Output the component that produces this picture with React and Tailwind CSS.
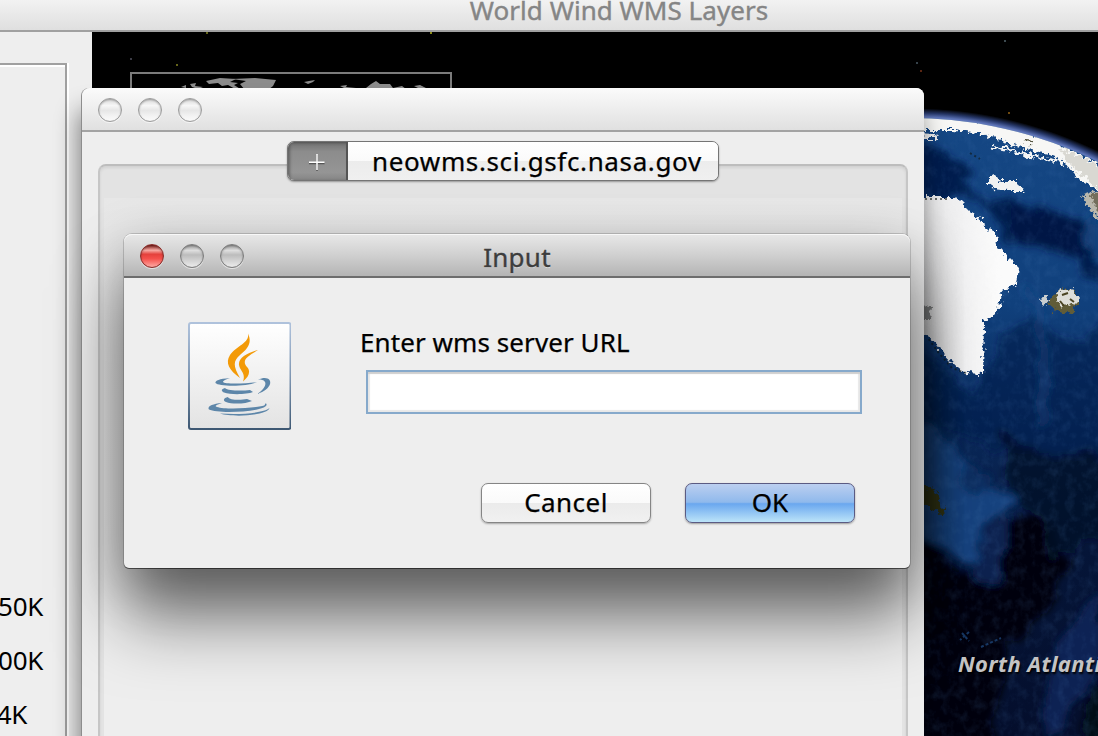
import React from "react";

function WindowButtons({ tone }) {
  const light = "border-[#9c9c9c] bg-[linear-gradient(#d9d9d9,#f7f7f7_30%,#e6e6e6_52%,#f4f4f4_80%,#fafafa)]";
  const grey = "border-[#7c7c7c] bg-[linear-gradient(#9b9b9b,#dedede_25%,#bcbcbc_45%,#c9c9c9_60%,#ececec)]";
  const red = "border-[#8a2b27] bg-[linear-gradient(#7d1916,#f7aaa3_24%,#e4413c_42%,#f4504b_62%,#ffaaa4)]";
  const rest = tone === "light" ? light : grey;
  const first = tone === "light" ? light : red;
  return (
    <div className="flex gap-4">
      {[first, rest, rest].map((c, i) => (
        <span key={i} className={"size-6 rounded-full border-[1.5px] shadow-[0_1px_0_rgba(255,255,255,.6),inset_0_1px_2px_rgba(0,0,0,.3)] " + c} />
      ))}
    </div>
  );
}

function SidePanel() {
  return (
    <aside className="w-[92px] shrink-0 bg-[#eeeeee] pt-[31px]">
      <div className="h-full w-[69px] border-r-2 border-white">
        <div className="h-full w-[67px] border-t-2 border-r-2 border-[#a0a0a0] shadow-[inset_0_2px_0_#fff]">
          <div className="flex flex-col items-end pt-[514px] text-[26px] leading-[54px] tracking-[-.3px] text-black">
            <span className="mr-[22px] whitespace-nowrap">250K</span>
            <span className="mr-[22px] whitespace-nowrap">500K</span>
            <span className="mr-[38px] whitespace-nowrap">4K</span>
          </div>
        </div>
      </div>
    </aside>
  );
}

function Globe() {
  return (
    <svg className="block h-full w-full" viewBox="92 32 1006 704">
      <defs>
        <radialGradient id="air" gradientUnits="userSpaceOnUse" cx="910" cy="542" r="434">
          <stop offset=".965" stopColor="#8ea4dd" />
          <stop offset=".98" stopColor="#5b72b5" />
          <stop offset=".989" stopColor="#263768" />
          <stop offset="1" stopColor="#000" />
        </radialGradient>
        <linearGradient id="sea" x1="0" y1="120" x2="0" y2="736" gradientUnits="userSpaceOnUse">
          <stop offset="0" stopColor="#154784" />
          <stop offset=".3" stopColor="#10407c" />
          <stop offset=".5" stopColor="#0a2a5c" />
          <stop offset=".7" stopColor="#051538" />
          <stop offset="1" stopColor="#040e2c" />
        </linearGradient>
        <linearGradient id="ice" x1="924" x2="1000" y1="0" y2="0" gradientUnits="userSpaceOnUse">
          <stop offset="0" stopColor="#e9e9ea" />
          <stop offset=".45" stopColor="#f1f1f2" />
          <stop offset="1" stopColor="#fbfbfb" />
        </linearGradient>
        <linearGradient id="shade" x1="924" x2="965" y1="0" y2="0" gradientUnits="userSpaceOnUse">
          <stop offset="0" stopColor="#000" stopOpacity=".3" />
          <stop offset="1" stopColor="#000" stopOpacity="0" />
        </linearGradient>
        <linearGradient id="fade" x1="0" x2="0" y1="190" y2="420" gradientUnits="userSpaceOnUse">
          <stop offset="0" stopColor="#000" />
          <stop offset="1" stopColor="#fff" />
        </linearGradient>
        <mask id="lower"><rect x="924" y="140" width="60" height="500" fill="url(#fade)" /></mask>
        <filter id="rag" x="-10%" y="-10%" width="120%" height="120%">
          <feTurbulence type="fractalNoise" baseFrequency=".2" numOctaves="3" seed="4" />
          <feDisplacementMap in="SourceGraphic" scale="11" xChannelSelector="R" yChannelSelector="G" />
          <feGaussianBlur stdDeviation=".5" />
        </filter>
        <filter id="soft" x="-30%" y="-30%" width="160%" height="160%">
          <feTurbulence type="fractalNoise" baseFrequency=".04" numOctaves="4" seed="9" />
          <feDisplacementMap in="SourceGraphic" scale="22" xChannelSelector="R" yChannelSelector="G" />
          <feGaussianBlur stdDeviation="3.5" />
        </filter>
        <filter id="grain" x="0" y="0" width="100%" height="100%">
          <feTurbulence type="fractalNoise" baseFrequency=".12 .09" numOctaves="4" seed="3" />
          <feColorMatrix values="0 0 0 0 .08  0 0 0 0 .22  0 0 0 0 .5  0 1.6 0 0 -.68" />
        </filter>
        <clipPath id="disc"><circle cx="910" cy="542" r="424" /></clipPath>
      </defs>
      <rect x="92" y="32" width="1006" height="704" fill="#000" />
      <circle cx="910" cy="542" r="434" fill="url(#air)" />
      <g clipPath="url(#disc)">
        <rect x="900" y="100" width="198" height="636" fill="url(#sea)" />
        <g filter="url(#soft)">
          <path d="M915 140L945 153L975 175L962 186L985 196L1015 205L1050 208L1090 225L1105 290L1075 262L1050 245L1010 243L985 200L915 195Z" fill="#051f4e" />
          <path d="M1005 208L1090 218L1098 262L1045 250L1015 243Z" fill="#041743" opacity=".8" />
          <path d="M1098 205L1098 265L1084 245Z" fill="#123f79" />
          <path d="M915 345L975 395L1005 330L1030 320L1080 340L1105 320V460L1000 450L950 430L915 425Z" fill="#071d4c" opacity=".65" />
          <path d="M1030 290Q1052 350 1040 430" fill="none" stroke="#164988" strokeWidth="8" opacity=".4" />
          <path d="M900 425L932 425L960 455L978 474L1018 506L985 528L972 562L900 530Z" fill="#12427e" />
          <path d="M965 462L990 478L978 495L962 490Z" fill="#0a2d61" />
          <path d="M982 528L1015 518L1015 590L968 580Z" fill="#09204f" />
          <path d="M900 538L925 538L960 572L1000 588L1008 525L1040 510L1070 560L1050 610L1010 640L985 760H900Z" fill="#01040f" />
          <path d="M1000 430L1050 455L1130 450V530L1050 560L1040 510L1012 500Z" fill="#020b28" opacity=".8" />
          <path d="M1060 640L1085 610L1100 590V660L1060 730L1040 736Z" fill="#0b2860" opacity=".75" />
          <path d="M1090 690L1130 670V760H1080Z" fill="#020717" />
        </g>
        <rect x="924" y="110" width="174" height="626" filter="url(#grain)" opacity=".2" />
        <g filter="url(#rag)">
          <path d="M915 113L950 115L1000 123L1040 135L1130 178V206L1098 190L1080 180L1068 166L1048 154L1025 148L985 135L955 130L915 130Z" fill="#f7f7f5" />
          <path d="M1058 148L1085 158L1130 180V206L1098 189L1086 178L1073 168Z" fill="#d9d8d2" />
          <path d="M1022 141L1032 142" fill="none" stroke="#55543f" strokeWidth="2.500" />
          <path d="M992 146L1012 150L1032 156L1056 161" fill="none" stroke="#f4f5f5" strokeWidth="3" />
          <path d="M918 133L935 134L938 139L920 139Z" fill="#eee" />
          <path d="M975 177L979 175L986 182L1003 182L1003 186L1010 192L995 192L979 190L975 184Z" fill="#f1f2f2" transform="translate(14 -1)" />
          <path d="M905 197L955 197L970 212L996 234L997 246L1018 267L1016 284L1002 292L998 312L984 322L983 374L965 373L948 359L933 340L905 325Z" fill="url(#ice)" />
          <path d="M1082 196L1110 186V232L1092 213Z" fill="#b9b7ac" />
          <path d="M1091 194L1110 190V222L1096 208Z" fill="#736e5b" />
          <path d="M1052 297L1060 289L1075 290L1079 304L1070 314L1056 311L1048 304Z" fill="#615b37" />
          <path d="M1060 288L1066 291L1072 289L1079 300L1073 306L1066 303L1062 307L1056 300Z" fill="#deded9" />
          <path d="M1038 298L1046 297L1050 301L1043 305Z" fill="#c9ced0" />
          <path d="M905 485L934 488L940 503L946 508L942 517L930 506L905 505Z" fill="#343714" />
          <path d="M905 302L932 307L930 320L905 320Z" fill="#898b8c" />
        </g>
        <path d="M1062 295L1068 293M1070 299L1074 302M1060 301L1064 306" stroke="#4a4424" strokeWidth="2" />
        <g stroke="#101713" strokeWidth="2" strokeDasharray="2 3" opacity=".6">
          <path d="M970 153L980 159M925 199H950M966 373L952 368L938 352L928 338" fill="none" />
        </g>
        <path d="M962 633L969 641M969 632L960 640M981 647L1001 638" stroke="#173762" strokeWidth="2" strokeDasharray="3 2" />
        <rect x="924" y="140" width="60" height="500" fill="url(#shade)" mask="url(#lower)" />
      </g>
      <g fill="#65651a">
        <rect x="206" y="32" width="2" height="2" /><rect x="430" y="32" width="2" height="2" fill="#8c8c18" />
        <rect x="176" y="64" width="2" height="2" /><rect x="130" y="58" width="2" height="2" fill="#3c3c46" />
        <rect x="1004" y="40" width="2" height="2" fill="#3d4a50" /><rect x="916" y="62" width="2" height="2" fill="#36424a" />
        <rect x="920" y="70" width="2" height="2" fill="#5a2613" /><rect x="1008" y="112" width="2" height="2" fill="#6f4a10" />
      </g>
      <path d="M131 92V73H451V92" fill="none" stroke="#7b7b7b" strokeWidth="2" />
      <g fill="#8c8c8c">
        <path d="M206 81L220 78L236 79L230 82L238 83L234 85L242 90H237L228 85L222 86L218 83L209 84Z" />
        <path d="M232 79L255 78L276 80L273 86L268 90H245L240 84L246 81Z" />
        <path d="M181 87L186 85L186 88Z M190 84L196 83L195 86L203 87L198 89L192 87Z M304 82L309 81L315 80L313 82L308 84Z M340 86L347 85L346 87L356 88V89L344 88Z" />
        <path d="M366 88L371 84L376 81L380 84L390 84L393 88L402 86L406 89H366Z M414 86L420 85L426 88L418 88Z" />
      </g>
    </svg>
  );
}

function JavaIcon() {
  return (
    <svg className="block h-[108px] w-[103px]" viewBox="188 322 103 108">
      <defs>
        <linearGradient id="edge" x1="0" y1="0" x2="0" y2="1">
          <stop offset="0" stopColor="#afc2dc" /><stop offset=".5" stopColor="#7f97b3" /><stop offset="1" stopColor="#3e5873" />
        </linearGradient>
        <linearGradient id="face" x1="0" y1="0" x2="0" y2="1">
          <stop offset="0" stopColor="#fff" /><stop offset="1" stopColor="#e3e3e3" />
        </linearGradient>
      </defs>
      <rect x="189" y="323" width="101.500" height="106" rx="2" fill="url(#face)" stroke="url(#edge)" strokeWidth="2" />
      <g fill="#f39a08">
        <path d="M248 333.500C253 344 246 350 240 355C233 361 233 366 240 378C229 370 225 363 230 355C236 346 250 343 248 333.500Z" />
        <path d="M258 350C247 353 238 358 239 365C240 371 246 373 243 381.500C249 377 251 371 247 367C241 360 248 356 258 350Z" />
      </g>
      <g fill="#5d86a9">
        <path d="M230 378C218 379 215 381 215.500 383C218 386.500 247 387 257 382C244 384 224 384 223 382C223 380.500 226 379.500 230 378Z" />
        <path d="M258 379.500C273 373 276 388 257 394C267 388 269 379 258 379.500Z" />
        <path d="M225 388C221 389 221 391 224 392.500C231 395 247 394.500 253 392L250 390C242 391 228 391 225 388Z" />
        <path d="M228 397C223 398 223 401 226 402C232 404.500 246 404 252 401L247 399C240 400.500 229 400 228 397Z" />
        <path d="M222 403C211 404 207 407 209 409.500C218 414 260 412 266 406C268 403 264 403 265 405C260 408 226 410 217 407C214 406 216 405 222 403Z" />
        <path d="M220 413.500C232 417.500 267 416 269.500 408C264 413 240 415 220 413.500Z" />
      </g>
    </svg>
  );
}

function BrowserWindow() {
  return (
    <section className="absolute top-[88px] left-[82px] h-[700px] w-[842px] overflow-hidden rounded-t-lg bg-[#eeeeee] shadow-[-1px_0_0_#8d8d8d,-3px_22px_24px_rgba(0,0,0,.48)]">
      <header className="flex h-11 items-center border-b-2 border-[#a3a3a3] bg-[linear-gradient(#fbfbfb,#e0e0e0)] pt-0.5 pl-4">
        <WindowButtons tone="light" />
      </header>
      <div className="mx-4 mt-8 h-full rounded-lg border-2 border-t-[#bdbdbd] border-x-[#c6c6c6] bg-[#e3e3e3] px-1 shadow-[inset_0_2px_3px_rgba(0,0,0,.08)]">
        <div className="-mt-[25px] ml-[183px] flex h-10 w-[432px] overflow-hidden rounded-[7px] border-[1.5px] border-[#757575] bg-white shadow-[0_1px_2px_rgba(0,0,0,.35)]">
          <div className="grid w-[60px] place-items-center border-r-2 border-[#555] bg-[linear-gradient(#707070,#8c8c8c_25%,#959595_80%,#858585)] pt-0.5 shadow-[inset_2px_1px_3px_rgba(0,0,0,.3)]">
            <svg className="size-4 overflow-visible" viewBox="0 0 16 16" fill="none" strokeWidth="1.500">
              <path d="M8 1V17M0 9.500H15.500" stroke="#555" />
              <path d="M8 0V16M0 8.200H15.500" stroke="#fff" />
            </svg>
          </div>
          <div className="flex flex-1 items-center bg-[linear-gradient(#fff,#fafafa_50%,#ececec_51%,#f0f0f0)] pl-6 text-[26px] tracking-[.63px] whitespace-nowrap text-black [-webkit-text-stroke:.25px_#000]">
            <span>neowms.sci.gsfc.nasa.gov</span>
          </div>
        </div>
        <div className="mt-[17px] h-full bg-[linear-gradient(#e7e7e7,#ebebeb_20%,#eee_50%)]" />
      </div>
    </section>
  );
}

function InputDialog() {
  return (
    <section className="absolute top-[234px] left-[124px] h-[334px] w-[786px] rounded-t-lg rounded-b-[5px] bg-[#eeeeee] shadow-[0_0_0_1px_rgba(0,0,0,.16),0_1px_0_0_rgba(0,0,0,.45),0_52px_68px_rgba(0,0,0,.5),0_14px_52px_rgba(0,0,0,.27)]">
      <header className="relative flex h-11 items-center justify-center rounded-t-lg border-b-2 border-[#6d6d6d] bg-[linear-gradient(#e8e8e8,#d0d0d0_50%,#b4b4b4)] shadow-[inset_0_1px_0_#f8f8f8]">
        <div className="absolute top-[10px] left-4"><WindowButtons tone="active" /></div>
        <h2 className="mt-1 text-[26px] tracking-[.25px] text-[#3d3d3d] [-webkit-text-stroke:.35px_#3d3d3d] [text-shadow:0_1px_0_#ddd]">Input</h2>
      </header>
      <div className="flex pt-11 pl-16">
        <JavaIcon />
        <div className="ml-[69px]">
          <label className="block h-12 pt-[3px] text-[26px] leading-[34px] tracking-[.08px] whitespace-nowrap text-black [-webkit-text-stroke:.25px_#000]">Enter wms server URL</label>
          <div className="ml-[6px] h-11 w-[496px] border-2 border-[#86a9cb] bg-white shadow-[inset_0_2px_1px_#cfcfcf,inset_2px_-2px_1px_#e8e8e8,inset_-2px_0_1px_#e8e8e8]" />
        </div>
      </div>
      <div className="mt-[53px] flex justify-end gap-[34px] pr-[55px] text-[26px] text-black [-webkit-text-stroke:.25px_#000]">
        <button className="h-10 w-[170px] rounded-[7px] border-[1.5px] border-[#858585] bg-[linear-gradient(#fff,#fafafa_50%,#ebebeb_51%,#f1f1f1)] pb-0.5 leading-none tracking-[.45px] shadow-[0_1px_2px_rgba(0,0,0,.3)]">Cancel</button>
        <button className="h-10 w-[170px] rounded-[7px] border-[1.5px] border-[#5b5b83] bg-[linear-gradient(#bccff0,#8fb9ec_48%,#6aa7ef_52%,#bce4f8)] pb-0.5 leading-none shadow-[0_1px_2px_rgba(0,0,0,.35)]">OK</button>
      </div>
    </section>
  );
}

export default function App() {
  return (
    <main className="relative flex h-[736px] w-[1098px] flex-col overflow-hidden bg-[#eeeeee] font-['Noto_Sans','Open_Sans',sans-serif]">
      <header className="flex h-8 shrink-0 justify-center border-b-2 border-[#a0a0a0] bg-[linear-gradient(#f2f2f2,#dfdfdf)] pl-[140px]">
        <h1 className="-mt-[7px] text-[26px] leading-[34px] tracking-[.05px] whitespace-nowrap text-[#858585] [-webkit-text-stroke:.4px_#858585]">World Wind WMS Layers</h1>
      </header>
      <div className="flex min-h-0 flex-1">
        <SidePanel />
        <div className="relative min-w-0 flex-1 overflow-hidden bg-black">
          <Globe />
          <span className="absolute top-[615px] left-[866px] text-[22px] leading-8 font-bold tracking-[.4px] whitespace-nowrap text-[#c4c4c4] italic [text-shadow:1px_2px_2px_#000]">North Atlantic</span>
        </div>
      </div>
      <BrowserWindow />
      <InputDialog />
    </main>
  );
}
